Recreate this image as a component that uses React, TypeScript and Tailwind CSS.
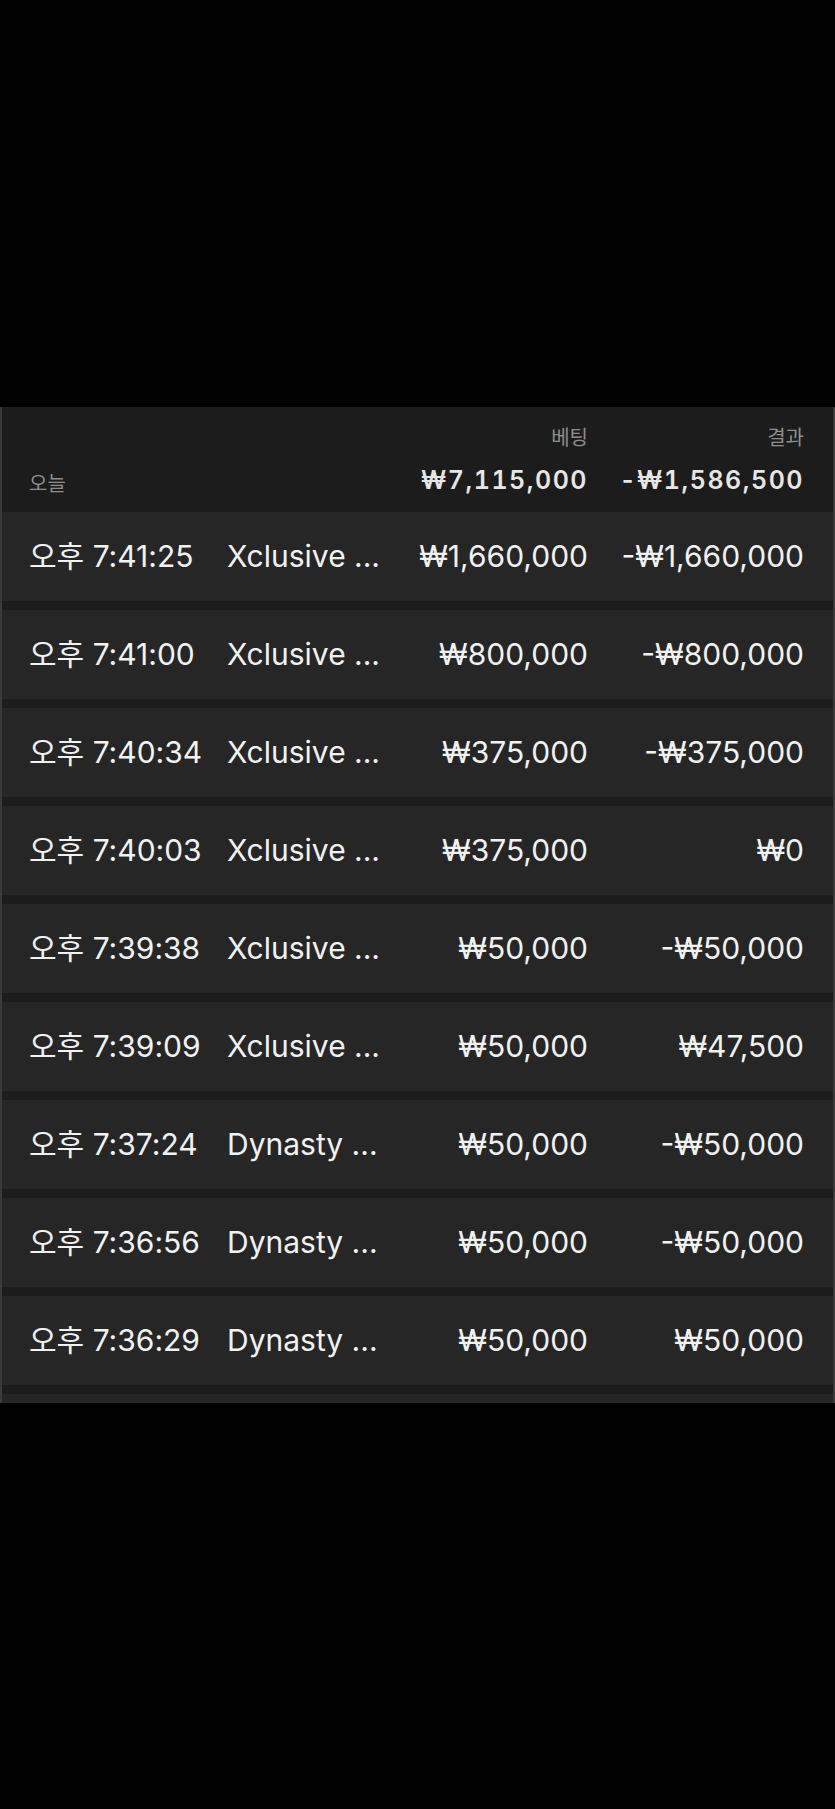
import React from "react";

type Bet = {
  time: string;
  game: string;
  amount: string;
  result: string;
};

const bets: Bet[] = [
  { time: "오후 7:41:25", game: "Xclusive ...", amount: "₩1,660,000", result: "-₩1,660,000" },
  { time: "오후 7:41:00", game: "Xclusive ...", amount: "₩800,000", result: "-₩800,000" },
  { time: "오후 7:40:34", game: "Xclusive ...", amount: "₩375,000", result: "-₩375,000" },
  { time: "오후 7:40:03", game: "Xclusive ...", amount: "₩375,000", result: "₩0" },
  { time: "오후 7:39:38", game: "Xclusive ...", amount: "₩50,000", result: "-₩50,000" },
  { time: "오후 7:39:09", game: "Xclusive ...", amount: "₩50,000", result: "₩47,500" },
  { time: "오후 7:37:24", game: "Dynasty ...", amount: "₩50,000", result: "-₩50,000" },
  { time: "오후 7:36:56", game: "Dynasty ...", amount: "₩50,000", result: "-₩50,000" },
  { time: "오후 7:36:29", game: "Dynasty ...", amount: "₩50,000", result: "₩50,000" },
];

const font = "font-['Inter','Noto_Sans_CJK_KR',sans-serif]";

const BetRow = ({ bet }: { bet: Bet }) => (
  <div className="flex h-[89px] shrink-0 items-center bg-[#262626] pl-[27px] pr-[29px] text-[30px] text-[#f2f2f2]">
    <span className="w-[198px] whitespace-nowrap">{bet.time}</span>
    <span className="min-w-0 flex-1 whitespace-nowrap">{bet.game}</span>
    <span className="w-[200px] text-right whitespace-nowrap">{bet.amount}</span>
    <span className="w-[216px] text-right whitespace-nowrap">{bet.result}</span>
  </div>
);

export default function App() {
  return (
    <div className={`min-h-screen bg-black ${font}`}>
      <div className="h-[407px]" />
      <div className="flex h-[996px] flex-col gap-[9px] overflow-hidden border-x-2 border-[#3a3a3a] bg-[#1c1c1c]">
        {/* summary header */}
        <div className="flex h-[96px] shrink-0 pl-[27px] pr-[29px]">
          <div className="flex w-[198px] items-end pb-[4px] text-[20px] text-[#8e8e8e]">
            오늘
          </div>
          <div className="flex-1" />
          <div className="flex w-[200px] flex-col items-end pt-[16px]">
            <span className="text-[20px] leading-[30px] text-[#8e8e8e]">베팅</span>
            <span className="mt-[9px] text-[25px] leading-[36px] font-semibold tracking-[0.06em] tabular-nums text-[#e6e6e6]">
              ₩7,115,000
            </span>
          </div>
          <div className="flex w-[216px] flex-col items-end pt-[16px]">
            <span className="text-[20px] leading-[30px] text-[#8e8e8e]">결과</span>
            <span className="mt-[9px] text-[25px] leading-[36px] font-semibold tracking-[0.06em] tabular-nums text-[#e6e6e6]">
              -₩1,586,500
            </span>
          </div>
        </div>

        {bets.map((bet) => (
          <BetRow key={bet.time} bet={bet} />
        ))}
        <div className="h-[89px] shrink-0 bg-[#262626]" />
      </div>
    </div>
  );
}
